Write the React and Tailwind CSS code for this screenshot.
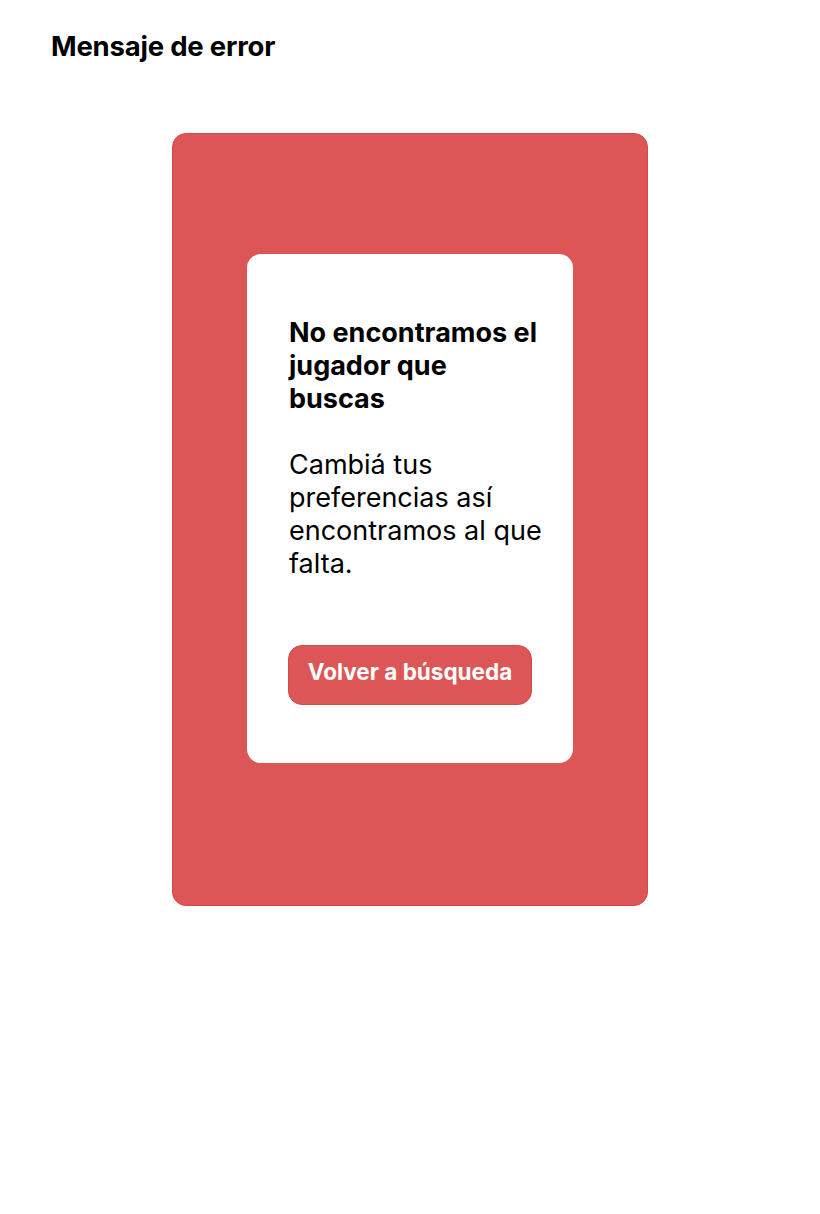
export default function App() {
  return (
    <div className="min-h-screen bg-white font-['Inter',sans-serif] text-black">
      <h1 className="pl-[51px] pt-[28px] text-[27.5px] font-bold leading-[36px] tracking-[-0.2px]">Mensaje de error</h1>

      <div className="mt-[69px] flex justify-center">
        <div className="w-[476px] h-[773px] rounded-[14px] border border-[#d24a4a] bg-[#dc5656] pt-[120px] flex justify-center">
          <div className="w-[326px] h-[509px] rounded-[14px] bg-white pl-[42px] pr-[28px] pt-[62px]">
            <h2 className="text-[27px] font-bold leading-[33px]">No encontramos el jugador que buscas</h2>
            <p className="mt-[33px] text-[27px] font-normal leading-[33px]">
              Cambiá tus preferencias así encontramos al que falta.
            </p>
            <button className="-ml-px mt-[65px] h-[60px] w-[244px] rounded-[14px] border border-[#d24a4a] bg-[#dc5656] pb-[7px] text-[22.5px] font-bold text-white">
              Volver a búsqueda
            </button>
          </div>
        </div>
      </div>
    </div>
  );
}
